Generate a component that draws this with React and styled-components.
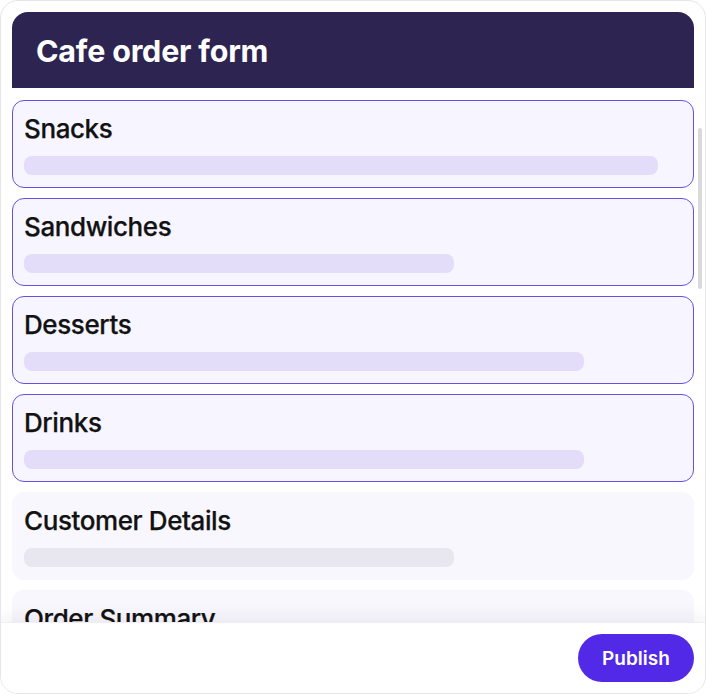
import React from "react";
import styled, { createGlobalStyle } from "styled-components";

const GlobalStyle = createGlobalStyle`
  html, body {
    margin: 0;
    padding: 0;
    background: #ffffff;
    font-family: Inter, "Noto Sans", sans-serif;
  }
  * {
    box-sizing: border-box;
  }
`;

const Frame = styled.div`
  position: relative;
  width: 706px;
  height: 694px;
  border: 1px solid #e6e6ea;
  border-radius: 18px;
  background: #ffffff;
  display: flex;
  flex-direction: column;
  overflow: hidden;
`;

const Header = styled.div`
  margin: 11px 11px 0 11px;
  height: 76px;
  flex: none;
  background: #2e2452;
  border-radius: 16px 16px 0 0;
  display: flex;
  align-items: center;
  padding: 0 24px 0;
`;

const Title = styled.h1`
  margin: 0;
  color: #ffffff;
  font-size: 30.5px;
  font-weight: 700;
  letter-spacing: -0.2px;
`;

const Scroller = styled.div`
  flex: 1;
  min-height: 0;
  overflow-y: auto;
  padding: 12px 0 12px 11px;
  display: flex;
  flex-direction: column;
  gap: 10px;
  scrollbar-width: none;

  &::-webkit-scrollbar {
    display: none;
  }
`;

/* overlay scrollbar thumb, sits on top of the scroll area */
const ScrollThumb = styled.div`
  position: absolute;
  left: 697px;
  top: 127px;
  width: 4px;
  height: 161px;
  border-radius: 2px;
  background: #d9d9dc;
`;

const Card = styled.div`
  flex: none;
  width: 682px;
  height: 88px;
  border-radius: 12px;
  padding: 12px 11px;
  display: flex;
  flex-direction: column;
  gap: 11px;
  background: ${(p) => (p.$active ? "#f7f5ff" : "#f8f7fd")};
  border: 1px solid ${(p) => (p.$active ? "#6b4fe2" : "#f8f7fd")};
`;

const CardTitle = styled.div`
  font-family: "Inter Medium", Inter, "Noto Sans", sans-serif;
  font-size: 26px;
  line-height: 32px;
  font-weight: 500;
  color: #121212;
  letter-spacing: -0.4px;
  -webkit-text-stroke: 0.25px #121212;
`;

const Bar = styled.div`
  height: 20px;
  border-radius: 8px;
  background: ${(p) => (p.$active ? "#e3ddfa" : "#e8e7ef")};
`;

const Footer = styled.div`
  flex: none;
  height: 71px;
  border-top: 1px solid #efeff2;
  box-shadow: 0 -6px 14px rgba(30, 20, 60, 0.06);
  display: flex;
  justify-content: flex-end;
  align-items: flex-start;
  padding: 11px 11px 0 0;
  position: relative;
  background: #ffffff;
`;

const PublishButton = styled.button`
  width: 116px;
  height: 48px;
  border: none;
  border-radius: 24px;
  background: #5229e6;
  color: #ffffff;
  font-family: Inter, "Noto Sans", sans-serif;
  font-size: 19px;
  font-weight: 600;
  cursor: pointer;
`;

const sections = [
  { name: "Snacks", width: 634, active: true },
  { name: "Sandwiches", width: 430, active: true },
  { name: "Desserts", width: 560, active: true },
  { name: "Drinks", width: 560, active: true },
  { name: "Customer Details", width: 430, active: false },
  { name: "Order Summary", width: 520, active: false },
  { name: "Payment", width: 480, active: false },
  { name: "Delivery Options", width: 400, active: false },
  { name: "Special Requests", width: 540, active: false },
  { name: "Allergies", width: 360, active: false },
  { name: "Loyalty Program", width: 460, active: false },
  { name: "Feedback", width: 500, active: false },
  { name: "Pickup Time", width: 380, active: false },
  { name: "Confirmation", width: 440, active: false },
];

export default function App() {
  return (
    <>
      <GlobalStyle />
      <Frame>
        <Header>
          <Title>Cafe order form</Title>
        </Header>
        <Scroller>
          {sections.map((s) => (
            <Card key={s.name} $active={s.active}>
              <CardTitle>{s.name}</CardTitle>
              <Bar $active={s.active} style={{ width: s.width }} />
            </Card>
          ))}
        </Scroller>
        <ScrollThumb />
        <Footer>
          <PublishButton>Publish</PublishButton>
        </Footer>
      </Frame>
    </>
  );
}
